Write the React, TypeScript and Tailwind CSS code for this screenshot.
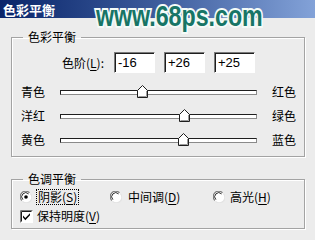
import type { ReactNode } from "react";

const cjk = "font-['Noto_Sans_CJK_SC','Noto_Sans',sans-serif]";

const sliders = [
  { left: "青色", right: "红色", value: -16 },
  { left: "洋红", right: "绿色", value: 26 },
  { left: "黄色", right: "蓝色", value: 25 },
];

function Key({ children }: { children: ReactNode }) {
  return <span className="underline underline-offset-2">{children}</span>;
}

function Field({ value }: { value: string }) {
  return (
    <div className="w-[41px] h-[21px] bg-white border border-t-[#7a7a7a] border-l-[#7a7a7a] border-r-white border-b-white shadow-[inset_1px_1px_0_#1e1e1e] flex items-center pl-[3px] font-['Liberation_Sans',Arial,sans-serif] text-[13px] leading-none text-black">
      {value}
    </div>
  );
}

function Thumb() {
  return (
    <svg width="11" height="13" viewBox="0 0 11 13">
      <path d="M0.5 12.5V5.5L5.5 0.5L10.5 5.5V12.5Z" fill="#fff" stroke="#1e1e1e" />
      <path d="M9.5 6V11.5H1.5" fill="none" stroke="#9a9a9a" />
    </svg>
  );
}

function Track({ value }: { value: number }) {
  const left = ((value + 100) / 200) * 197 - 5.5;
  return (
    <div className="relative w-[197px] h-[5px]">
      <div className="h-[5px] bg-white border border-[#1e1e1e] border-b-[#8a8a8a] border-r-[#8a8a8a]" />
      <div className="absolute top-[-5px]" style={{ left }}>
        <Thumb />
      </div>
    </div>
  );
}

function Radio({ checked }: { checked?: boolean }) {
  return (
    <svg width="12" height="12" viewBox="0 0 12 12">
      <circle cx="6" cy="6" r="5.5" fill="#fff" />
      <path d="M1.8 9.5A5.3 5.3 0 0 1 9.5 1.8" fill="none" stroke="#7a7a7a" strokeWidth="1.2" />
      <path d="M2.9 8.6A4 4 0 0 1 8.6 2.9" fill="none" stroke="#2a2a2a" />
      <path d="M10.3 2.6A5.3 5.3 0 0 1 2.6 10.3" fill="none" stroke="#e4e4e4" strokeWidth="1.2" />
      {checked && <circle cx="6" cy="6" r="1.8" fill="#000" />}
    </svg>
  );
}

function Check() {
  return (
    <svg width="13" height="13" viewBox="0 0 13 13">
      <rect x="0" y="0" width="13" height="13" fill="#fff" />
      <path d="M0.5 12.5V0.5H12.5" fill="none" stroke="#7a7a7a" />
      <path d="M1.5 11.5V1.5H11.5" fill="none" stroke="#1e1e1e" />
      <path d="M3 5.5L5.3 8L10 3.2V5.3L5.3 10.2L3 7.6Z" fill="#000" />
    </svg>
  );
}

function Group({ title, className, children }: { title: string; className?: string; children: ReactNode }) {
  return (
    <fieldset
      className={`ml-[11px] w-[294px] border border-[#a3a3a3] shadow-[inset_1px_1px_0_#fff,1px_1px_0_#fff] ${className ?? ""}`}
    >
      <legend className="ml-[11px] px-[5px] text-[12px] leading-[16px] text-black">{title}</legend>
      {children}
    </fieldset>
  );
}

export default function App() {
  return (
    <div className={`relative w-[315px] h-[240px] overflow-hidden bg-[#ececec] ${cjk}`}>
      <div className="h-[18px] bg-gradient-to-r from-[#0a246a] via-[#3d5c9c] to-[#83a2d8] pl-[3px] flex items-center">
        <span className="text-white font-bold text-[13px] leading-none">色彩平衡</span>
      </div>

      {/* watermark over the title bar */}
      <div className="absolute left-[96px] top-[2px] origin-left scale-x-[0.8] font-['Liberation_Sans',Arial,sans-serif] font-bold text-[29px] leading-[29px] text-[#177566] [-webkit-text-stroke:4px_#f4fbf8] [paint-order:stroke_fill] whitespace-nowrap">
        www.68ps.com
      </div>

      <Group title="色彩平衡" className="mt-[11px] pb-[4px]">
        <div className="flex items-center pt-[7px] pl-[50px] text-[12px] text-black">
          <span className="w-[52px] leading-none">
            色阶(<Key>L</Key>):
          </span>
          <div className="flex gap-[9px]">
            <Field value="-16" />
            <Field value="+26" />
            <Field value="+25" />
          </div>
        </div>
        <div className="mt-[7px]">
          {sliders.map((s) => (
            <div key={s.left} className="h-[24px] flex items-center pl-[9px] text-[12px] text-black">
              <span className="w-[39px] leading-none">{s.left}</span>
              <Track value={s.value} />
              <span className="ml-[15px] leading-none">{s.right}</span>
            </div>
          ))}
        </div>
      </Group>

      <Group title="色调平衡" className="mt-[14px] pb-[3px]">
        <div className="flex items-center h-[18px] mt-[1px] pl-[8px] text-[12px] text-black">
          <div className="w-[90px] flex items-center">
            <Radio checked />
            <span className="ml-[4px] px-[1px] py-[1px] border border-dotted border-black leading-none">
              阴影(<Key>S</Key>)
            </span>
          </div>
          <div className="w-[103px] flex items-center">
            <Radio />
            <span className="ml-[6px] leading-none">
              中间调(<Key>D</Key>)
            </span>
          </div>
          <div className="flex items-center">
            <Radio />
            <span className="ml-[5px] leading-none">
              高光(<Key>H</Key>)
            </span>
          </div>
        </div>
        <div className="flex items-center h-[18px] mt-[1px] pl-[8px] text-[12px] text-black">
          <Check />
          <span className="ml-[4px] leading-none">
            保持明度(<Key>V</Key>)
          </span>
        </div>
      </Group>
    </div>
  );
}
